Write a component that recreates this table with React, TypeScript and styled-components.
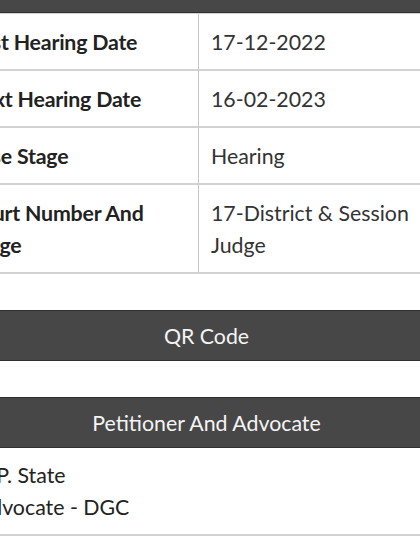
import React from "react";
import styled, { createGlobalStyle } from "styled-components";

const GlobalStyle = createGlobalStyle`
  html, body {
    margin: 0;
    padding: 0;
    background: #ffffff;
    overflow: hidden;
  }
  body {
    font-family: Lato, "Open Sans", "Liberation Sans", sans-serif;
    -webkit-font-smoothing: antialiased;
  }
`;

const Page = styled.div`
  margin-left: -45px;
  width: 503px;
  display: flex;
  flex-direction: column;
`;

const TopBar = styled.div`
  height: 12px;
  background: #474747;
  border-bottom: 1px solid #2f2f2f;
`;

const Table = styled.div`
  display: grid;
  grid-template-columns: 244px 1fr;
  border-top: 1px solid #d2d2d2;
  border-bottom: 2px solid #d2d2d2;
`;

const Cell = styled.div<{ $label?: boolean; $last?: boolean }>`
  padding: 12px 12px 11px;
  font-size: 21.33px;
  line-height: 32px;
  color: ${(p) => (p.$label ? "#222222" : "#333333")};
  font-weight: ${(p) => (p.$label ? 700 : 400)};
  border-bottom: ${(p) => (p.$last ? "none" : "2px solid #d2d2d2")};
  border-right: ${(p) => (p.$label ? "1px solid #c8c8c8" : "none")};
  letter-spacing: ${(p) => (p.$label ? "-0.2px" : "0")};
`;

const SectionHeader = styled.div<{ $top: number }>`
  margin-top: ${(p) => p.$top}px;
  background: #474747;
  border-top: 1px solid #2f2f2f;
  border-bottom: 1px solid #2f2f2f;
  color: #f4f4f4;
  font-size: 21.33px;
  line-height: 32px;
  padding: 9px 0 8px;
  text-align: center;
`;

const PartyBox = styled.div`
  padding: 11px 12px 11px 21px;
  font-size: 21.33px;
  line-height: 32px;
  color: #222222;
  border-bottom: 2px solid #d2d2d2;
`;

const rows: [string, string][] = [
  ["First Hearing Date", "17-12-2022"],
  ["Next Hearing Date", "16-02-2023"],
  ["Case Stage", "Hearing"],
  ["Court Number And Judge", "17-District & Session Judge"],
];

export default function App() {
  return (
    <>
      <GlobalStyle />
      <Page>
        <TopBar />
        <Table>
          {rows.map(([label, value], i) => (
            <React.Fragment key={label}>
              <Cell $label $last={i === rows.length - 1}>
                {label}
              </Cell>
              <Cell $last={i === rows.length - 1}>{value}</Cell>
            </React.Fragment>
          ))}
        </Table>
        <SectionHeader $top={36}>QR Code</SectionHeader>
        <SectionHeader $top={36}>Petitioner And Advocate</SectionHeader>
        <PartyBox>
          U.P. State
          <br />
          Advocate - DGC
        </PartyBox>
      </Page>
    </>
  );
}
